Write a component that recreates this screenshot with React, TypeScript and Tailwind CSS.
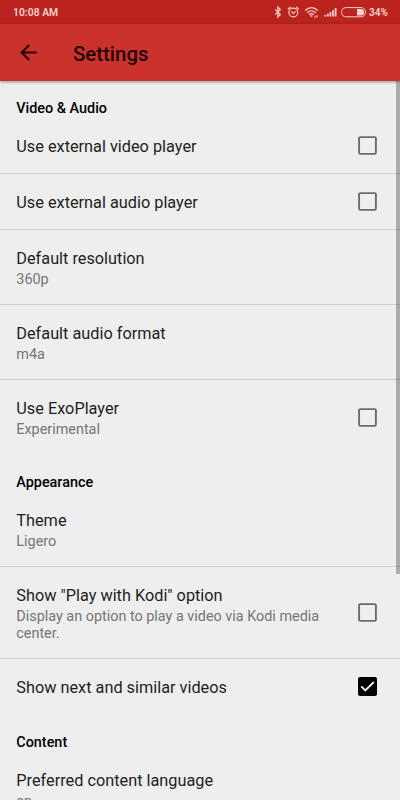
import React, { ReactNode } from 'react';

const StatusIcons: React.FC = () => (
  <svg className="shrink-0" width="92" height="14" viewBox="0 0 92 14" fill="none" stroke="#f8cfcc" strokeWidth="1">
    {/* bluetooth */}
    <path d="M1.2 4.3 L6.4 9.5 L3.9 12 V2 L6.4 4.5 L1.2 9.7" strokeWidth="1.2" />
    {/* alarm */}
    <circle cx="19.3" cy="7.5" r="4.4" strokeWidth="1.1" />
    <path d="M17.2 6.4 L19.3 8.4 L21.6 6.4" strokeWidth="1.1" />
    <path d="M14 4.2 L16.4 2 M22.2 2 L24.6 4.2" strokeWidth="1.3" />
    {/* wifi */}
    <path d="M31.2 5.4 C34.8 1.7 40.2 1.7 43.8 5.4" strokeWidth="1.4" />
    <path d="M33.3 7.7 C35.8 5.2 39.2 5.2 41.7 7.7" strokeWidth="1.4" />
    <path d="M35.2 9.7 C36.5 8.5 38.5 8.5 39.8 9.7" strokeWidth="1.4" />
    <circle cx="37.5" cy="11" r="0.9" fill="#f8cfcc" stroke="none" />
    <path d="M41.2 12.8 V10.8 M43 10.2 V12.4" strokeWidth="1.1" />
    {/* signal */}
    <path d="M51.2 11.5 V9.9 M53.8 11.5 V8.7 M56.4 11.5 V7 M59 11.5 V5.2 M61.6 11.5 V3" strokeWidth="1.8" />
    {/* battery */}
    <rect x="67.6" y="2.6" width="23.8" height="9.2" rx="4.2" />
    <path d="M83 4 H87 A3 3 0 0 1 90 7 V7.4 A3 3 0 0 1 87 10.4 H83 Z" fill="#f8cfcc" stroke="none" />
  </svg>
);

const StatusBar: React.FC = () => (
  <div className="flex h-6 shrink-0 items-center justify-between bg-[#bb231e] px-[13px] text-[#fad4d1]">
    <span className="pt-[3px] text-[10.4px] font-semibold leading-none">10:08 AM</span>
    <div className="flex items-center gap-[3px]">
      <StatusIcons />
      <span className="w-[18px] whitespace-nowrap pt-0.5 text-[10px] font-semibold leading-none">34%</span>
    </div>
  </div>
);

const AppBar: React.FC = () => (
  <header className="z-10 flex h-[57px] shrink-0 items-center bg-[#cc322d] pl-4 shadow-[0_1px_3px_rgba(0,0,0,0.4)]">
    <svg width="25" height="25" viewBox="0 0 24 24" fill="#240504">
      <path d="M20 11H7.83l5.59-5.59L12 4l-8 8 8 8 1.41-1.41L7.83 13H20v-2z" />
    </svg>
    <h1 className="ml-8 pt-1 text-[20.4px] font-medium leading-none text-[#240504]">Settings</h1>
  </header>
);

const Checkbox: React.FC<{ checked: boolean }> = ({ checked }) => (
  <svg className="shrink-0" width="19" height="19" viewBox="0 0 19 19" fill="none">
    {checked ? (
      <>
        <rect width="19" height="19" rx="2" fill="#000" />
        <path d="M3.2 9.4 L7.3 13.4 L15.8 5" stroke="#eee" strokeWidth="1.9" />
      </>
    ) : (
      <rect x="1.1" y="1.1" width="16.8" height="16.8" rx="1.2" stroke="#6b6b6b" strokeWidth="1.9" />
    )}
  </svg>
);

const Category: React.FC<{ title: string; children: ReactNode }> = ({ title, children }) => (
  <section className="pb-[0.75px]">
    <h2 className="h-[37.25px] pl-[16.3px] pt-[18.5px] text-[14.4px] font-medium leading-[18px] text-black">
      {title}
    </h2>
    <div className="divide-y divide-[#d0d0d0]">{children}</div>
  </section>
);

interface PreferenceProps {
  title: string;
  summary?: string;
  checked?: boolean;
}
const Preference: React.FC<PreferenceProps> = ({ title, summary, checked }) => (
  <div className="flex items-center justify-between py-[18px] pl-[16.3px] pr-[23px]">
    <div className="-mb-px w-[310px] pt-px">
      <div className="text-[16.3px] leading-[19px] text-[#1e1e1e]">{title}</div>
      {summary && <div className="-mb-px mt-[3px] text-[14.4px] leading-[17px] text-[#757575]">{summary}</div>}
    </div>
    {checked !== undefined && <Checkbox checked={checked} />}
  </div>
);

export default function App() {
  return (
    <div className="relative flex h-[800px] w-[400px] flex-col overflow-hidden bg-[#eee] font-['Roboto',sans-serif]">
      <StatusBar />
      <AppBar />
      <main className="min-h-0 flex-1 overflow-hidden">
        <Category title="Video &amp; Audio">
          <Preference title="Use external video player" checked={false} />
          <Preference title="Use external audio player" checked={false} />
          <Preference title="Default resolution" summary="360p" />
          <Preference title="Default audio format" summary="m4a" />
          <Preference title="Use ExoPlayer" summary="Experimental" checked={false} />
        </Category>
        <Category title="Appearance">
          <Preference title="Theme" summary="Ligero" />
          <Preference
            title='Show "Play with Kodi" option'
            summary="Display an option to play a video via Kodi media center."
            checked={false}
          />
          <Preference title="Show next and similar videos" checked />
        </Category>
        <Category title="Content">
          <Preference title="Preferred content language" summary="en" />
        </Category>
      </main>
      {/* scroll thumb */}
      <div className="absolute right-0 top-[81px] h-[493px] w-1 bg-black/28" />
    </div>
  );
}
